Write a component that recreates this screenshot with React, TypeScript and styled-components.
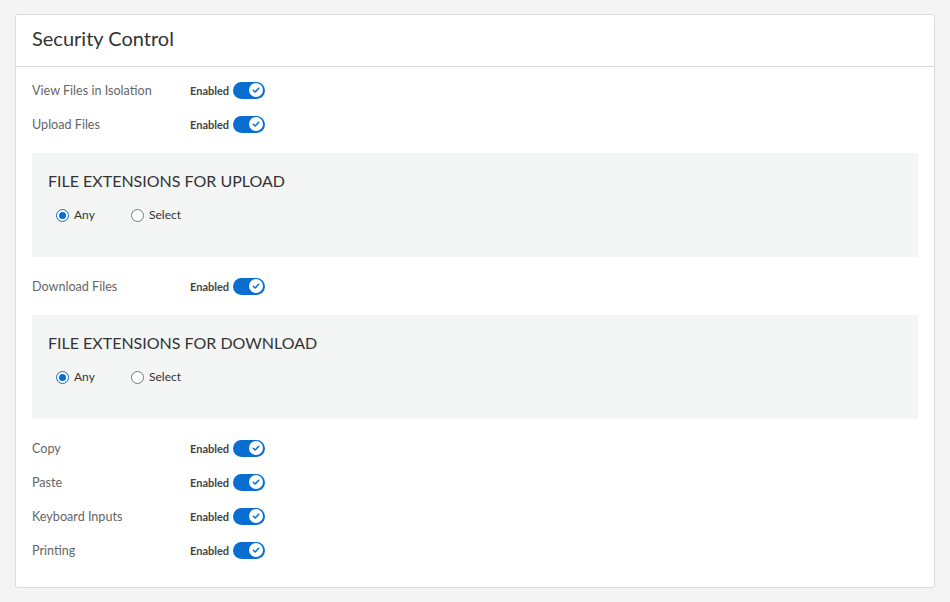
import React from "react";
import styled, { createGlobalStyle } from "styled-components";

const GlobalStyle = createGlobalStyle`
  body {
    margin: 0;
    background: #f3f4f3;
    font-family: Lato, "Liberation Sans", sans-serif;
    color: #333;
  }
`;

const Page = styled.div`
  padding: 14px 15px 14px 15px;
`;

const Card = styled.section`
  background: #fff;
  border: 1px solid #d9dbdb;
  border-radius: 3px;
`;

const CardHeader = styled.header`
  height: 52px;
  display: flex;
  align-items: center;
  padding: 0 16px 6px;
  box-sizing: border-box;
  border-bottom: 1px solid #d9dbdb;
`;

const Title = styled.h2`
  margin: 0;
  font-size: 20px;
  font-weight: 400;
  color: #333;
`;

const CardBody = styled.div`
  padding: 6px 16px 20px;
`;

const Row = styled.div`
  height: 34px;
  display: flex;
  align-items: center;
`;

const Label = styled.span`
  width: 158px;
  font-size: 12.6px;
  color: #666;
`;

const State = styled.span`
  font-size: 11px;
  font-weight: 700;
  color: #444;
  margin-right: 4px;
`;

const Track = styled.span`
  width: 32px;
  height: 17px;
  border-radius: 9px;
  background: #0a6ed1;
  display: flex;
  align-items: center;
  justify-content: flex-end;
  padding-right: 2px;
  box-sizing: border-box;
`;

const Knob = styled.span`
  width: 14px;
  height: 14px;
  border-radius: 50%;
  background: #fff;
  display: flex;
  align-items: center;
  justify-content: center;
`;

const Panel = styled.div`
  background: #f4f5f5;
  margin: 12px 0;
  height: 104px;
  box-sizing: border-box;
  padding: 19px 16px 0;
`;

const PanelTitle = styled.h3`
  margin: 0;
  font-size: 16px;
  line-height: 18px;
  font-weight: 400;
  color: #333;
  text-transform: uppercase;
`;

const RadioGroup = styled.div`
  display: flex;
  margin: 16px 0 0 8px;
`;

const RadioItem = styled.label`
  display: flex;
  align-items: center;
  min-width: 75px;
  font-size: 12px;
  line-height: 18px;
  color: #333;
`;

const RadioCircle = styled.span<{ $checked?: boolean }>`
  width: 13px;
  height: 13px;
  box-sizing: border-box;
  border-radius: 50%;
  border: 1px solid ${(p) => (p.$checked ? "#0a6ed1" : "#777")};
  background: #fff;
  margin-right: 5px;
  display: flex;
  align-items: center;
  justify-content: center;

  &::after {
    content: "";
    width: 7px;
    height: 7px;
    border-radius: 50%;
    background: ${(p) => (p.$checked ? "#0a6ed1" : "transparent")};
  }
`;

const Toggle = () => (
  <Track>
    <Knob>
      <svg width="10" height="10" viewBox="0 0 10 10">
        <path d="M2.3 5.2 L4.2 7 L7.7 3.2" fill="none" stroke="#0a6ed1" strokeWidth="1.5" strokeLinecap="round" strokeLinejoin="round" />
      </svg>
    </Knob>
  </Track>
);

const Setting = ({ label }: { label: string }) => (
  <Row>
    <Label>{label}</Label>
    <State>Enabled</State>
    <Toggle />
  </Row>
);

const Extensions = ({ title }: { title: string }) => (
  <Panel>
    <PanelTitle>{title}</PanelTitle>
    <RadioGroup>
      <RadioItem>
        <RadioCircle $checked />
        Any
      </RadioItem>
      <RadioItem>
        <RadioCircle />
        Select
      </RadioItem>
    </RadioGroup>
  </Panel>
);

export default function App() {
  return (
    <Page>
      <GlobalStyle />
      <Card>
        <CardHeader>
          <Title>Security Control</Title>
        </CardHeader>
        <CardBody>
          <Setting label="View Files in Isolation" />
          <Setting label="Upload Files" />
          <Extensions title="File Extensions for Upload" />
          <Setting label="Download Files" />
          <Extensions title="File Extensions for Download" />
          <Setting label="Copy" />
          <Setting label="Paste" />
          <Setting label="Keyboard Inputs" />
          <Setting label="Printing" />
        </CardBody>
      </Card>
    </Page>
  );
}
